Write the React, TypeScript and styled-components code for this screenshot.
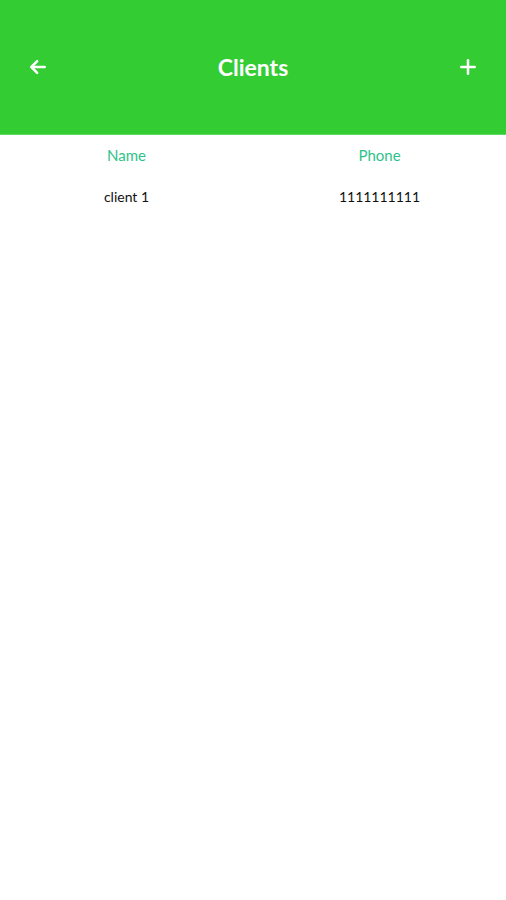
import React from 'react'
import styled, { createGlobalStyle } from 'styled-components'

const GlobalStyle = createGlobalStyle`
  html, body {
    margin: 0;
    padding: 0;
    background: #ffffff;
    font-family: Lato, "Noto Sans", sans-serif;
  }
`

const clients = [{ name: 'client 1', phone: '1111111111' }]

const App = () => {
  return (
    <>
      <GlobalStyle />
      <Page>
        <Header>
          <IconButton aria-label="back">
            <svg width="20" height="20" viewBox="0 0 24 24" fill="none" stroke="#fff" strokeWidth="3" strokeLinecap="round" strokeLinejoin="round">
              <path d="M20 12H5" />
              <path d="M11 5l-7 7 7 7" />
            </svg>
          </IconButton>
          <Title>Clients</Title>
          <IconButton aria-label="add">
            <svg width="20" height="20" viewBox="0 0 24 24" fill="none" stroke="#fff" strokeWidth="3" strokeLinecap="round">
              <path d="M12 4v16" />
              <path d="M4 12h16" />
            </svg>
          </IconButton>
        </Header>
        <Table>
          <Row>
            <HeadCell>Name</HeadCell>
            <HeadCell>Phone</HeadCell>
          </Row>
          {clients.map((c) => (
            <Row key={c.name}>
              <Cell>{c.name}</Cell>
              <Cell>{c.phone}</Cell>
            </Row>
          ))}
        </Table>
      </Page>
    </>
  )
}

const Page = styled.div`
  width: 506px;
  min-height: 900px;
  background: #fff;
`

const Header = styled.div`
  height: 135px;
  background-color: #33cc33;
  display: flex;
  align-items: center;
  justify-content: space-between;
  padding: 0 26px;
  box-sizing: border-box;
  border-bottom: 1px solid #5fd85f;
`

const IconButton = styled.div`
  width: 24px;
  height: 24px;
  display: flex;
  align-items: center;
  justify-content: center;
`

const Title = styled.h1`
  margin: 0;
  color: #fff;
  font-size: 23px;
  font-weight: 700;
`

const Table = styled.div`
  display: flex;
  flex-direction: column;
`

const Row = styled.div`
  display: grid;
  grid-template-columns: 1fr 1fr;
  height: 42px;
  align-items: center;
  &:first-child {
    height: 40px;
  }
`

const HeadCell = styled.div`
  text-align: center;
  color: #2fc28a;
  font-size: 15px;
`

const Cell = styled.div`
  text-align: center;
  color: #111;
  font-size: 14px;
`

export default App
